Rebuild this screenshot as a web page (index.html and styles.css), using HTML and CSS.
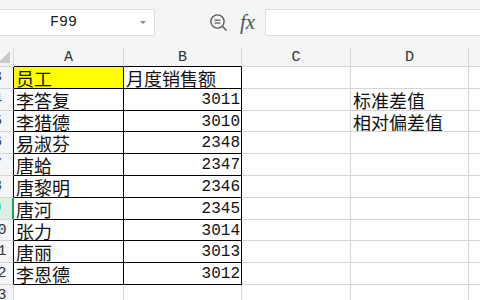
FILE: index.html
```html
<html>
    <head>
        <meta charset="utf-8">
        <link rel="stylesheet" href="styles.css">
    </head>

    <body>
        <div class="sheet">
            <div class="toolbar">
                <div class="namebox">
                    <span class="name">F99</span>
                    <span class="caret"></span>
                </div>
                <svg class="find" width="20" height="20" viewBox="0 0 20 20">
                    <circle cx="8.5" cy="8.5" r="6.6" fill="none" stroke="#5a5a5a" stroke-width="1.4"/>
                    <line x1="5.6" y1="7.2" x2="11.4" y2="7.2" stroke="#5a5a5a" stroke-width="1.3"/>
                    <line x1="5.6" y1="10" x2="11.4" y2="10" stroke="#5a5a5a" stroke-width="1.3"/>
                    <line x1="13.3" y1="13.3" x2="17.5" y2="17.5" stroke="#5a5a5a" stroke-width="1.6"/>
                </svg>
                <span class="fx">fx</span>
                <div class="formula"></div>
            </div>

            <div class="grid">
                <div class="corner"><span class="tri"></span></div>
                <div class="colhead box-top">A</div>
                <div class="colhead box-top">B</div>
                <div class="colhead">C</div>
                <div class="colhead">D</div>
                <div class="colhead"></div>

                <div class="rowhead box-left">3</div>
                <div class="cell box yellow">员工</div>
                <div class="cell box">月度销售额</div>
                <div class="cell"></div>
                <div class="cell"></div>
                <div class="cell"></div>

                <div class="rowhead box-left">4</div>
                <div class="cell box">李答复</div>
                <div class="cell box num">3011</div>
                <div class="cell"></div>
                <div class="cell">标准差值</div>
                <div class="cell"></div>

                <div class="rowhead box-left">5</div>
                <div class="cell box">李猎德</div>
                <div class="cell box num">3010</div>
                <div class="cell"></div>
                <div class="cell">相对偏差值</div>
                <div class="cell"></div>

                <div class="rowhead box-left">6</div>
                <div class="cell box">易淑芬</div>
                <div class="cell box num">2348</div>
                <div class="cell"></div>
                <div class="cell"></div>
                <div class="cell"></div>

                <div class="rowhead box-left">7</div>
                <div class="cell box">唐蛤</div>
                <div class="cell box num">2347</div>
                <div class="cell"></div>
                <div class="cell"></div>
                <div class="cell"></div>

                <div class="rowhead box-left">8</div>
                <div class="cell box">唐黎明</div>
                <div class="cell box num">2346</div>
                <div class="cell"></div>
                <div class="cell"></div>
                <div class="cell"></div>

                <div class="rowhead box-left active">9</div>
                <div class="cell box">唐河</div>
                <div class="cell box num">2345</div>
                <div class="cell"></div>
                <div class="cell"></div>
                <div class="cell"></div>

                <div class="rowhead box-left">10</div>
                <div class="cell box">张力</div>
                <div class="cell box num">3014</div>
                <div class="cell"></div>
                <div class="cell"></div>
                <div class="cell"></div>

                <div class="rowhead box-left">11</div>
                <div class="cell box">唐丽</div>
                <div class="cell box num">3013</div>
                <div class="cell"></div>
                <div class="cell"></div>
                <div class="cell"></div>

                <div class="rowhead box-left">12</div>
                <div class="cell box">李恩德</div>
                <div class="cell box num">3012</div>
                <div class="cell"></div>
                <div class="cell"></div>
                <div class="cell"></div>

                <div class="rowhead">13</div>
                <div class="cell"></div>
                <div class="cell"></div>
                <div class="cell"></div>
                <div class="cell"></div>
                <div class="cell"></div>
            </div>
        </div>
    </body>
</html>
```

FILE: styles.css
```css
body {
    margin: 0;
    overflow: hidden;
    background-color: white;
}

.sheet {
    margin-left: -18px;
    width: 530px;
}

.toolbar {
    display: flex;
    align-items: center;
    height: 47px;
    padding-left: 4px;
    background-color: #f4f5f7;
    box-sizing: border-box;
}

.namebox {
    display: flex;
    align-items: center;
    width: 169px;
    height: 27px;
    margin-top: -2px;
    background-color: white;
    border: 1px solid #dcdde0;
    border-radius: 2px;
    box-sizing: border-box;
}

.name {
    flex: 1;
    text-align: center;
    font-family: "Liberation Mono", monospace;
    font-size: 15px;
    color: #222;
}

.caret {
    width: 0;
    height: 0;
    margin-right: 8px;
    border-left: 3px solid transparent;
    border-right: 3px solid transparent;
    border-top: 3px solid #888;
}

.find {
    margin-left: 54px;
    margin-top: -2px;
}

.fx {
    margin-left: 11px;
    margin-top: -3px;
    font-family: "Liberation Serif", serif;
    font-style: italic;
    font-size: 21px;
    color: #555;
}

.formula {
    flex: 1;
    height: 27px;
    margin-left: 10px;
    margin-top: -2px;
    background-color: white;
    border: 1px solid #dcdde0;
    border-right: none;
    border-radius: 2px 0 0 2px;
    box-sizing: border-box;
}

.grid {
    display: grid;
    grid-template-columns: 32px 110px 118px 109px 118px 1fr;
    grid-template-rows: 20px;
    grid-auto-rows: 21.8px;
}

.grid > div {
    box-sizing: border-box;
    border-right: 1px solid #d6d6d6;
    border-bottom: 1px solid #d6d6d6;
    overflow: hidden;
    white-space: nowrap;
}

.corner {
    position: relative;
    background-color: #f4f5f7;
}

.tri {
    position: absolute;
    right: 3px;
    bottom: 3px;
    width: 0;
    height: 0;
    border-left: 12px solid transparent;
    border-bottom: 12px solid #c9cacc;
}

.colhead {
    background-color: #f4f5f7;
    text-align: center;
    font-family: "Liberation Mono", monospace;
    font-size: 15px;
    line-height: 21px;
    color: #333;
}

.rowhead {
    background-color: #f4f5f7;
    text-align: center;
    font-family: "Liberation Mono", monospace;
    font-size: 15px;
    line-height: 22px;
    color: #333;
}

.grid > .box-top {
    border-bottom-color: #000;
}

.grid > .box-left {
    border-right-color: #000;
}

.grid > .active {
    background-color: #dcefe4;
    color: #1f9a55;
    border-right: 2px solid #23a15c;
}

.cell {
    padding: 0 2px;
    font-family: "Noto Sans CJK SC", sans-serif;
    font-size: 18px;
    line-height: 22px;
    color: #111;
}

.grid > .box {
    border-right-color: #000;
    border-bottom-color: #000;
}

.yellow {
    background-color: #ffff00;
}

.num {
    text-align: right;
    font-family: "Liberation Mono", monospace;
    font-size: 16px;
    padding-right: 1px;
}
```
